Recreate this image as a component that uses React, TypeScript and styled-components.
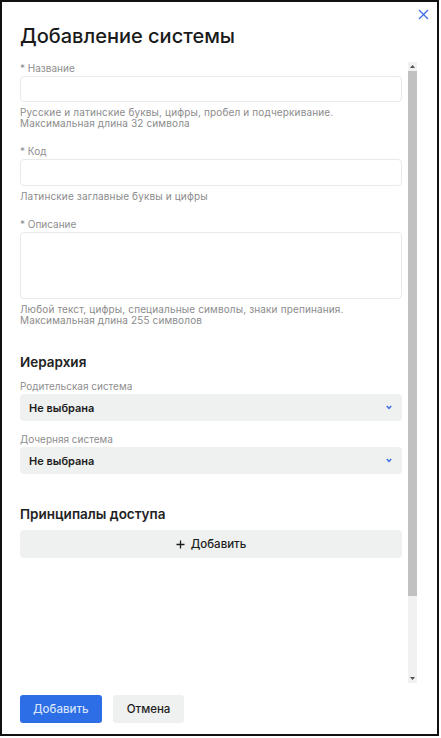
import React from 'react'
import styled, { createGlobalStyle } from 'styled-components'

const GlobalStyle = createGlobalStyle`
  html, body {
    margin: 0;
    padding: 0;
    background: #fff;
  }

  body {
    font-family: Inter, "Noto Sans", sans-serif;
    color: #1f1f1f;
  }

  * {
    box-sizing: border-box;
  }
`

const Modal = styled.div`
  position: relative;
  width: 439px;
  height: 736px;
  border: 2px solid #111;
  background: #fff;
  display: flex;
  flex-direction: column;
`

const CloseButton = styled.button`
  position: absolute;
  top: 7px;
  right: 8px;
  width: 11px;
  height: 11px;
  padding: 0;
  border: 0;
  background: none;
  display: flex;
  cursor: pointer;
`

const Title = styled.h2`
  margin: 20px 0 12px 18px;
  font-size: 20px;
  line-height: 28px;
  font-weight: 500;
  color: #1a1a1a;
`

const Body = styled.div`
  flex: 1;
  min-height: 0;
  margin-left: 18px;
  display: flex;
  gap: 6px;
`

const Content = styled.div`
  width: 382px;
  overflow: hidden;
  display: flex;
  flex-direction: column;
`

const ScrollBar = styled.div`
  width: 9px;
  height: 621px;
  background: #f1f1f1;
  display: flex;
  flex-direction: column;
`

const ScrollArrow = styled.div`
  height: 9px;
  display: flex;
  align-items: center;
  justify-content: center;
`

const Thumb = styled.div`
  height: 525px;
  background: #c1c1c1;
`

const Track = styled.div`
  flex: 1;
`

const Field = styled.div<{ $gap?: number }>`
  display: flex;
  flex-direction: column;
  margin-top: ${p => p.$gap ?? 0}px;
`

const Label = styled.label`
  font-size: 10px;
  line-height: 12px;
  color: #8e8e8e;
  margin-bottom: 2px;
`

const TextInput = styled.input<{ $h?: number }>`
  height: ${p => p.$h ?? 27}px;
  width: 100%;
  border: 1px solid #e9e9e9;
  border-radius: 4px;
  background: #fff;
  font: inherit;
  font-size: 12px;
  padding: 0 8px;
  outline: none;
`

const TextArea = styled.textarea`
  display: block;
  height: 67px;
  width: 100%;
  border: 1px solid #e9e9e9;
  border-radius: 4px;
  background: #fff;
  font: inherit;
  font-size: 12px;
  padding: 6px 8px;
  resize: none;
  outline: none;
`

const Help = styled.div`
  margin-top: 5px;
  font-size: 10px;
  line-height: 11px;
  letter-spacing: 0.14px;
  color: #8c8c8c;
`

const Section = styled.h3<{ $gap: number }>`
  margin: ${p => p.$gap}px 0 0;
  font-size: 13.5px;
  line-height: 18px;
  font-weight: 600;
  color: #222;
`

const Select = styled.div`
  height: 27px;
  border-radius: 4px;
  background: #eff0f0;
  display: flex;
  align-items: center;
  justify-content: space-between;
  padding: 0 10px 0 9px;
  font-size: 11px;
  font-weight: 600;
  color: #1c1c1c;
`

const AddRow = styled.button`
  margin-top: 7px;
  height: 28px;
  width: 100%;
  border: 0;
  border-radius: 4px;
  background: #eff0f0;
  display: flex;
  align-items: center;
  justify-content: center;
  gap: 6px;
  font: inherit;
  font-size: 11.5px;
  font-weight: 500;
  color: #1c1c1c;
  cursor: pointer;
`

const Footer = styled.div`
  display: flex;
  gap: 11px;
  padding: 10px 18px 11px;
`

const Button = styled.button<{ $primary?: boolean }>`
  height: 28px;
  padding: 0 ${p => (p.$primary ? 13 : 14)}px;
  border: 0;
  border-radius: 3px;
  font: inherit;
  font-size: 11.5px;
  font-weight: 500;
  background: ${p => (p.$primary ? '#2d6de6' : '#eff0f0')};
  color: ${p => (p.$primary ? '#d6e3fb' : '#1c1c1c')};
  cursor: pointer;
`

const Chevron = () => (
  <svg width="6" height="5" viewBox="0 0 6 5">
    <polyline points="0.8,1 3,3.4 5.2,1" fill="none" stroke="#3a6ee0" strokeWidth="1.5" />
  </svg>
)

const Plus = () => (
  <svg width="9" height="9" viewBox="0 0 9 9">
    <path d="M4.5 0.5v8M0.5 4.5h8" stroke="#1c1c1c" strokeWidth="1.3" />
  </svg>
)

const Arrow = ({ down }: { down?: boolean }) => (
  <svg width="5" height="3" viewBox="0 0 5 3">
    <polygon points={down ? '0,0 5,0 2.5,3' : '0,3 5,3 2.5,0'} fill="#505050" />
  </svg>
)

export default function App() {
  return (
    <>
      <GlobalStyle />
      <Modal>
        <CloseButton aria-label="Закрыть">
          <svg width="11" height="11" viewBox="0 0 11 11">
            <path d="M1 1l9 9M10 1l-9 9" stroke="#3b6fe2" strokeWidth="1.3" />
          </svg>
        </CloseButton>
        <Title>Добавление системы</Title>
        <Body>
          <Content>
            <Field>
              <Label>* Название</Label>
              <TextInput $h={26} />
              <Help>
                Русские и латинские буквы, цифры, пробел и подчеркивание.
                <br />
                Максимальная длина 32 символа
              </Help>
            </Field>
            <Field $gap={16}>
              <Label>* Код</Label>
              <TextInput />
              <Help>Латинские заглавные буквы и цифры</Help>
            </Field>
            <Field $gap={16}>
              <Label>* Описание</Label>
              <TextArea />
              <Help>
                Любой текст, цифры, специальные символы, знаки препинания.
                <br />
                Максимальная длина 255 символов
              </Help>
            </Field>
            <Section $gap={27}>Иерархия</Section>
            <Field $gap={9}>
              <Label>Родительская система</Label>
              <Select>
                Не выбрана
                <Chevron />
              </Select>
            </Field>
            <Field $gap={12}>
              <Label>Дочерняя система</Label>
              <Select>
                Не выбрана
                <Chevron />
              </Select>
            </Field>
            <Section $gap={31}>Принципалы доступа</Section>
            <AddRow>
              <Plus />
              Добавить
            </AddRow>
          </Content>
          <ScrollBar>
            <ScrollArrow>
              <Arrow />
            </ScrollArrow>
            <Thumb />
            <Track />
            <ScrollArrow>
              <Arrow down />
            </ScrollArrow>
          </ScrollBar>
        </Body>
        <Footer>
          <Button $primary>Добавить</Button>
          <Button>Отмена</Button>
        </Footer>
      </Modal>
    </>
  )
}
